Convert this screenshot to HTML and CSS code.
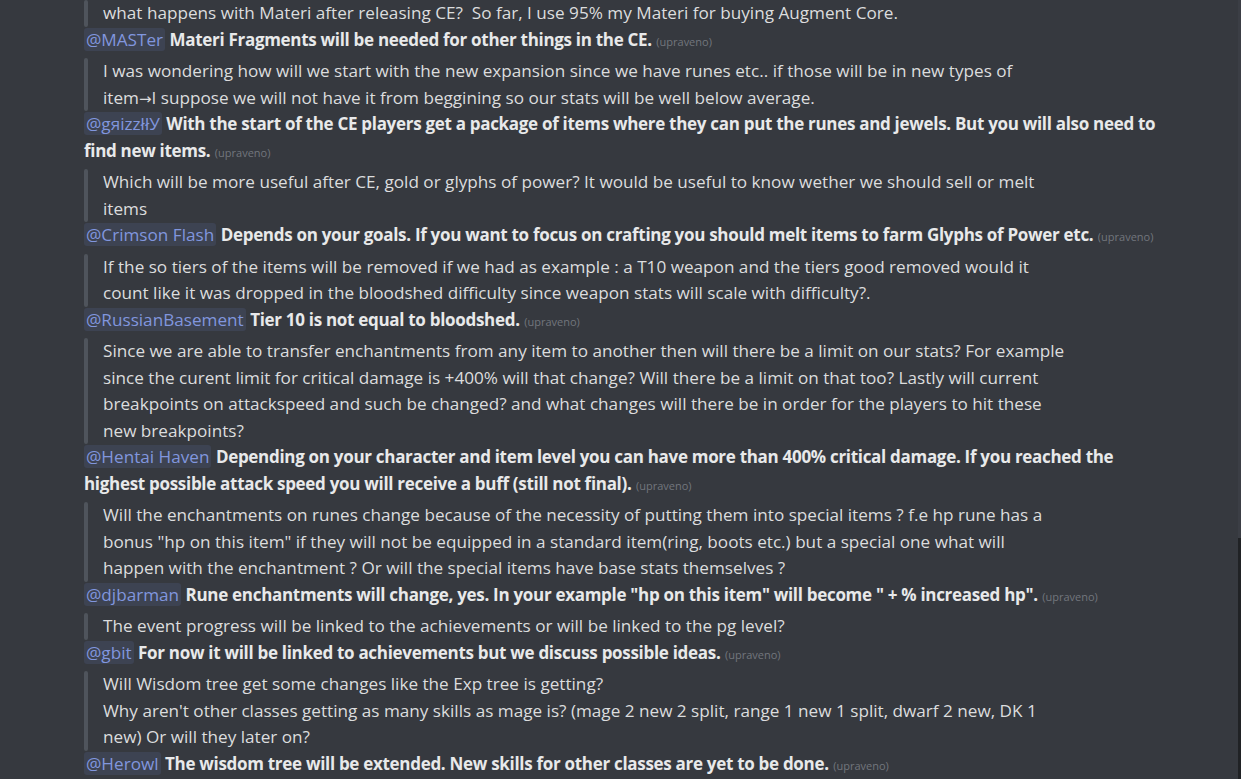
FILE: index.html
```html
<!DOCTYPE html>
<html lang="cs">
<head>
<meta charset="utf-8">
<title>Q&amp;A</title>
<link rel="stylesheet" href="styles.css">
</head>
<body>
<div class="chat">
  <blockquote class="quote first"><div class="bar"></div><div class="qtext">what happens with Materi after releasing CE?&nbsp; So far, I use 95% my Materi for buying Augment Core.</div></blockquote>
  <div class="reply"><span class="mention">@MASTer</span> <strong>Materi Fragments will be needed for other things in the CE.</strong> <span class="edited">(upraveno)</span></div>

  <blockquote class="quote"><div class="bar"></div><div class="qtext">I was wondering how will we start with the new expansion since we have runes etc.. if those will be in new types of<br>item<span class="arrow">→</span>I suppose we will not have it from beggining so our stats will be well below average.</div></blockquote>
  <div class="reply"><span class="mention">@gяizzłłУ</span> <strong>With the start of the CE players get a package of items where they can put the runes and jewels. But you will also need to<br>find new items.</strong> <span class="edited">(upraveno)</span></div>

  <blockquote class="quote"><div class="bar"></div><div class="qtext">Which will be more useful after CE, gold or glyphs of power? It would be useful to know wether we should sell or melt<br>items</div></blockquote>
  <div class="reply"><span class="mention">@Crimson Flash</span> <strong>Depends on your goals. If you want to focus on crafting you should melt items to farm Glyphs of Power etc.</strong> <span class="edited">(upraveno)</span></div>

  <blockquote class="quote"><div class="bar"></div><div class="qtext">If the so tiers of the items will be removed if we had as example : a T10 weapon and the tiers good removed would it<br>count like it was dropped in the bloodshed difficulty since weapon stats will scale with difficulty?.</div></blockquote>
  <div class="reply"><span class="mention">@RussianBasement</span> <strong>Tier 10 is not equal to bloodshed.</strong> <span class="edited">(upraveno)</span></div>

  <blockquote class="quote"><div class="bar"></div><div class="qtext">Since we are able to transfer enchantments from any item to another then will there be a limit on our stats? For example<br>since the curent limit for critical damage is +400% will that change? Will there be a limit on that too? Lastly will current<br>breakpoints on attackspeed and such be changed? and what changes will there be in order for the players to hit these<br>new breakpoints?</div></blockquote>
  <div class="reply"><span class="mention">@Hentai Haven</span> <strong>Depending on your character and item level you can have more than 400% critical damage. If you reached the<br>highest possible attack speed you will receive a buff (still not final).</strong> <span class="edited">(upraveno)</span></div>

  <blockquote class="quote"><div class="bar"></div><div class="qtext">Will the enchantments on runes change because of the necessity of putting them into special items ? f.e hp rune has a<br>bonus "hp on this item" if they will not be equipped in a standard item(ring, boots etc.) but a special one what will<br>happen with the enchantment ? Or will the special items have base stats themselves ?</div></blockquote>
  <div class="reply"><span class="mention">@djbarman</span> <strong>Rune enchantments will change, yes. In your example "hp on this item" will become " + % increased hp".</strong> <span class="edited">(upraveno)</span></div>

  <blockquote class="quote"><div class="bar"></div><div class="qtext">The event progress will be linked to the achievements or will be linked to the pg level?</div></blockquote>
  <div class="reply"><span class="mention">@gbit</span> <strong>For now it will be linked to achievements but we discuss possible ideas.</strong> <span class="edited">(upraveno)</span></div>

  <blockquote class="quote"><div class="bar"></div><div class="qtext">Will Wisdom tree get some changes like the Exp tree is getting?<br>Why aren't other classes getting as many skills as mage is? (mage 2 new 2 split, range 1 new 1 split, dwarf 2 new, DK 1<br>new) Or will they later on?</div></blockquote>
  <div class="reply"><span class="mention">@Herowl</span> <strong>The wisdom tree will be extended. New skills for other classes are yet to be done.</strong> <span class="edited">(upraveno)</span></div>
</div>
<div class="scrollbar"><div class="thumb"></div><div class="track"></div></div>
</body>
</html>
```
FILE: styles.css
```css
html, body {
  margin: 0;
  padding: 0;
  background: #36393f;
  height: 100%;
  overflow: hidden;
}
body {
  font-family: "Open Sans", "Noto Sans", sans-serif;
  font-size: 17.15px;
  line-height: 26.5px;
  color: #dcddde;
  position: relative;
}
.chat {
  padding-left: 84px;
  padding-top: 0;
  width: 1100px;
  white-space: nowrap;
}
.quote {
  display: flex;
  margin: 5px 0 0 0;
  padding: 0;
}
.quote.first {
  margin-top: 0;
}
.bar {
  width: 4px;
  flex: 0 0 4px;
  border-radius: 4px;
  background: #4f545c;
}
.qtext {
  padding-left: 15px;
}
.arrow {
  font-family: "DejaVu Sans", sans-serif;
  font-size: 15px;
  line-height: 1;
}
.reply {
  margin: 0;
}
.mention {
  color: #8196de;
  background: rgba(114, 137, 218, 0.12);
  border-radius: 3px;
  padding: 0 2px;
}
strong {
  font-weight: 700;
  color: #e8e9ea;
  font-size: 17px;
  letter-spacing: -0.3px;
}
.edited {
  font-size: 11px;
  line-height: 1;
  color: #72767d;
}
.scrollbar {
  position: absolute;
  top: 0;
  right: 0;
  width: 3px;
  height: 779px;
  display: flex;
  flex-direction: column;
}
.thumb {
  height: 538px;
  background: #3b3e45;
}
.track {
  flex: 1;
  background: #202225;
}
```
